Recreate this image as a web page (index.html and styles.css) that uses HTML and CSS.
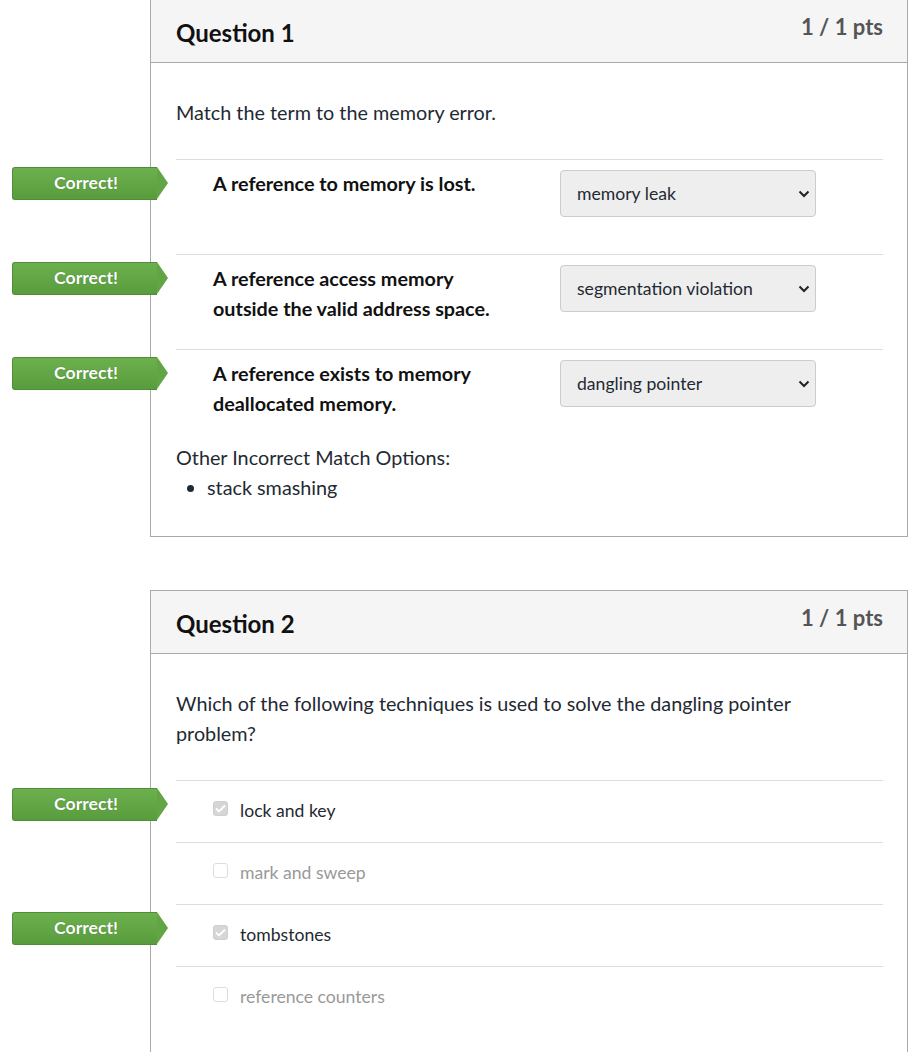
FILE: index.html
```html
<!DOCTYPE html>
<html>
<head>
<meta charset="utf-8">
<link rel="stylesheet" href="styles.css">
</head>
<body>
<div class="page">
  <div class="question first">
    <div class="q-header">
      <h2 class="q-title">Question 1</h2>
      <span class="q-pts">1 / 1 pts</span>
    </div>
    <div class="q-body">
      <p class="q-text">Match the term to the memory error.</p>
      <div class="match-row">
        <span class="badge">Correct!</span>
        <div class="term">A reference to memory is lost.</div>
        <div class="select"><span>memory leak</span><svg width="12" height="8" viewBox="0 0 12 8"><path d="M1.5 1.5 L6 6 L10.5 1.5" fill="none" stroke="#222" stroke-width="2"/></svg></div>
      </div>
      <div class="match-row">
        <span class="badge">Correct!</span>
        <div class="term">A reference access memory outside the valid address space.</div>
        <div class="select"><span>segmentation violation</span><svg width="12" height="8" viewBox="0 0 12 8"><path d="M1.5 1.5 L6 6 L10.5 1.5" fill="none" stroke="#222" stroke-width="2"/></svg></div>
      </div>
      <div class="match-row">
        <span class="badge">Correct!</span>
        <div class="term">A reference exists to memory deallocated memory.</div>
        <div class="select"><span>dangling pointer</span><svg width="12" height="8" viewBox="0 0 12 8"><path d="M1.5 1.5 L6 6 L10.5 1.5" fill="none" stroke="#222" stroke-width="2"/></svg></div>
      </div>
      <div class="other">
        <div>Other Incorrect Match Options:</div>
        <ul class="other-list"><li>stack smashing</li></ul>
      </div>
    </div>
  </div>

  <div class="question second">
    <div class="q-header">
      <h2 class="q-title">Question 2</h2>
      <span class="q-pts">1 / 1 pts</span>
    </div>
    <div class="q-body">
      <p class="q-text">Which of the following techniques is used to solve the dangling pointer problem?</p>
      <div class="answer selected">
        <span class="badge">Correct!</span>
        <span class="cb checked"><svg width="11" height="9" viewBox="0 0 11 9"><path d="M1 4.5 L4 7.5 L10 1.5" fill="none" stroke="#fff" stroke-width="1.8"/></svg></span>
        <span class="a-label">lock and key</span>
      </div>
      <div class="answer">
        <span class="cb"></span>
        <span class="a-label">mark and sweep</span>
      </div>
      <div class="answer selected">
        <span class="badge">Correct!</span>
        <span class="cb checked"><svg width="11" height="9" viewBox="0 0 11 9"><path d="M1 4.5 L4 7.5 L10 1.5" fill="none" stroke="#fff" stroke-width="1.8"/></svg></span>
        <span class="a-label">tombstones</span>
      </div>
      <div class="answer">
        <span class="cb"></span>
        <span class="a-label">reference counters</span>
      </div>
    </div>
  </div>
</div>
</body>
</html>
```

FILE: styles.css
```css
html, body {
  margin: 0;
  padding: 0;
  background: #fff;
}
body {
  font-family: Lato, "Open Sans", sans-serif;
  color: #1f2a33;
  overflow: hidden;
}
.page {
  padding-left: 150px;
  width: 758px;
}
.question {
  border: 1px solid #aaaaaa;
  box-sizing: border-box;
  width: 758px;
}
.question.first {
  margin-top: -1px;
}
.question.second {
  margin-top: 53px;
}
.q-header {
  background: #f5f5f5;
  border-bottom: 1px solid #aaaaaa;
  height: 63px;
  box-sizing: border-box;
  display: flex;
  justify-content: space-between;
  padding: 0 24px 0 25px;
}
.q-title {
  margin: 0;
  font-size: 24px;
  font-weight: 700;
  line-height: 66px;
  color: #111;
}
.q-pts {
  font-size: 22px;
  font-weight: 700;
  color: #555;
  line-height: 53px;
}
.q-body {
  padding: 34px 24px 34px 25px;
}
.q-text {
  margin: 0 0 32px 0;
  max-width: 660px;
  font-size: 19.8px;
  line-height: 30px;
  color: #1f2a33;
}
.match-row {
  position: relative;
  border-top: 1px solid #dddddd;
  height: 95px;
  box-sizing: border-box;
  display: flex;
  align-items: flex-start;
  padding-top: 8px;
}
.term {
  margin-left: 37px;
  width: 300px;
  font-size: 19.8px;
  font-weight: 700;
  line-height: 30px;
  color: #111;
}
.select {
  margin-left: 47px;
  margin-top: 2px;
  width: 256px;
  height: 47px;
  box-sizing: border-box;
  background: #eeeeee;
  border: 1px solid #cccccc;
  border-radius: 4px;
  display: flex;
  align-items: center;
  justify-content: space-between;
  padding: 0 5px 0 16px;
  font-size: 17.6px;
  color: #1f2a33;
}
.badge {
  position: absolute;
  left: -164px;
  top: 7px;
  width: 145px;
  height: 33px;
  box-sizing: border-box;
  background: linear-gradient(#6cb04e, #589c3d);
  border: 1px solid #4f8e37;
  border-right: none;
  border-radius: 3px 0 0 3px;
  color: #fff;
  font-size: 17.6px;
  font-weight: 700;
  line-height: 30px;
  text-align: center;
  text-shadow: 0 0 1px rgba(0,0,0,0.35);
  padding-left: 2px;
}
.badge::after {
  content: "";
  position: absolute;
  right: -11px;
  top: -1px;
  border-top: 16.5px solid transparent;
  border-bottom: 16.5px solid transparent;
  border-left: 11px solid #61a545;
}
.other {
  font-size: 19.8px;
  line-height: 30px;
  color: #1f2a33;
  margin-top: -2px;
}
.other-list {
  margin: 0;
  padding-left: 31px;
}
.answer {
  position: relative;
  border-top: 1px solid #dddddd;
  height: 62px;
  box-sizing: border-box;
  display: flex;
  align-items: center;
  padding-left: 37px;
  padding-bottom: 2px;
}
.answer .badge {
  top: 7px;
}
.cb {
  width: 15px;
  height: 15px;
  box-sizing: border-box;
  border: 1px solid #dddddd;
  border-radius: 3px;
  background: #fff;
  display: flex;
  align-items: center;
  justify-content: center;
  margin-right: 12px;
  margin-top: -4px;
}
.cb.checked {
  background: #d6d6d6;
  border-color: #cfcfcf;
}
.a-label {
  font-size: 17.6px;
  color: #999;
}
.answer.selected .a-label {
  color: #1f2a33;
}
```
